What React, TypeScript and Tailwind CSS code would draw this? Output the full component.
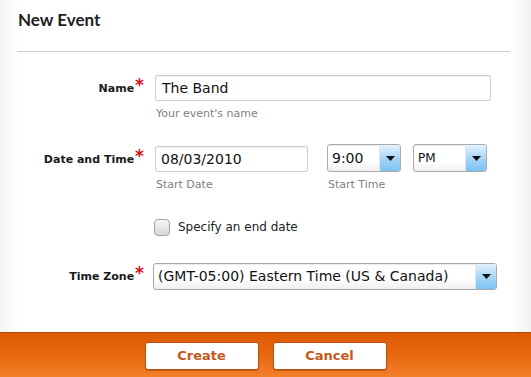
import type { ReactNode } from 'react';

const sans = "font-['DejaVu_Sans','Verdana',sans-serif]";

function Label({ children }: { children: ReactNode }) {
  return (
    <div className="flex items-start justify-end pr-[1px]">
      <span className="text-[11px] font-bold text-[#1a1a1a]">{children}</span>
      <span className="-mt-[4px] ml-[1px] text-[17px] font-bold leading-none text-[#d0121b]">*</span>
    </div>
  );
}

function Hint({ children }: { children: ReactNode }) {
  return <p className="mt-[6px] pl-[1px] text-[11px] leading-[14px] text-[#808080]">{children}</p>;
}

function Select({ value, className, textClass }: { value: string; className: string; textClass?: string }) {
  return (
    <div
      className={`flex rounded-[3px] border border-[#a9a9a9] bg-[linear-gradient(#fff,#fff_60%,#f0f0f0)] shadow-[inset_0_1px_1px_rgba(0,0,0,0.08)] ${className}`}
    >
      <span className={`flex flex-1 items-center pl-[4px] text-[#111] ${textClass ?? 'text-[14px]'}`}>{value}</span>
      <span className="flex w-[21px] items-center justify-center rounded-r-[2px] border-l border-[#dbe9f4] bg-[linear-gradient(#e4f2fc,#a8d6f8_50%,#7cc3f4)]">
        <svg width="9" height="5" viewBox="0 0 9 5">
          <path d="M0 0h9L4.5 5z" fill="#111" />
        </svg>
      </span>
    </div>
  );
}

export default function App() {
  return (
    <div
      className={`flex h-[377px] w-[531px] flex-col overflow-hidden bg-[linear-gradient(90deg,#f3f3f3,#fff_18px,#fff_512px,#f1f1f1)] ${sans}`}
    >
      <div className="flex-1 px-[17px]">
        <h1 className="pt-[10px] pl-[1px] font-['Lato',sans-serif] text-[17px] font-bold leading-[20px] text-[#222]">New Event</h1>
        <div className="mt-[21px] mr-[4px] h-px bg-[#cfcfcf]" />

        <div className="mt-[23px] grid grid-cols-[128px_1fr] gap-x-[10px] pr-[24px]">
          <div className="pt-[6px]">
            <Label>Name</Label>
          </div>
          <div>
            <div className="flex h-[26px] w-[336px] items-center rounded-[2px] border border-[#cfcfcf] bg-white pl-[6px] text-[14px] text-[#111] shadow-[inset_0_1px_1px_rgba(0,0,0,0.06)]">
              The Band
            </div>
            <Hint>Your event's name</Hint>
          </div>
        </div>

        <div className="mt-[23px] grid grid-cols-[128px_1fr] gap-x-[10px]">
          <div className="pt-[8px]">
            <Label>Date and Time</Label>
          </div>
          <div className="flex">
            <div>
              <div className="mt-[2px] flex h-[26px] w-[153px] items-center rounded-[2px] border border-[#cfcfcf] bg-white pl-[5px] text-[14px] text-[#111] shadow-[inset_0_1px_1px_rgba(0,0,0,0.06)]">
                08/03/2010
              </div>
              <Hint>Start Date</Hint>
            </div>
            <div className="ml-[19px]">
              <Select value="9:00" className="h-[28px] w-[74px]" />
              <Hint>Start Time</Hint>
            </div>
            <div className="ml-[12px]">
              <Select value="PM" className="h-[28px] w-[74px]" textClass="text-[12px]" />
            </div>
          </div>
        </div>

        <div className="mt-[26px] flex items-center pl-[137px]">
          <span className="h-[17px] w-[16px] rounded-[4px] border border-[#a3a3a3] bg-[linear-gradient(#f7f7f7,#e6e6e6_50%,#d8d8d8)]" />
          <span className="ml-[8px] text-[12px] text-[#222]">Specify an end date</span>
        </div>

        <div className="mt-[27px] grid grid-cols-[128px_1fr] gap-x-[8px]">
          <div className="pt-[6px]">
            <Label>Time Zone</Label>
          </div>
          <Select value="(GMT-05:00) Eastern Time (US & Canada)" className="h-[27px] w-[344px]" textClass="text-[14px]" />
        </div>
      </div>

      <div className="flex h-[45px] items-start justify-center gap-[14px] border-t border-[#b94a06] bg-[linear-gradient(#dc5905,#e8690f_50%,#f3802a)] pt-[9px]">
        <button className="h-[28px] w-[114px] rounded-[3px] border border-[#b9500c] bg-white text-[13px] font-bold text-[#c5581a] shadow-[0_1px_1px_rgba(0,0,0,0.2)]">
          Create
        </button>
        <button className="h-[28px] w-[114px] rounded-[3px] border border-[#b9500c] bg-white text-[13px] font-bold text-[#c5581a] shadow-[0_1px_1px_rgba(0,0,0,0.2)]">
          Cancel
        </button>
      </div>
    </div>
  );
}
